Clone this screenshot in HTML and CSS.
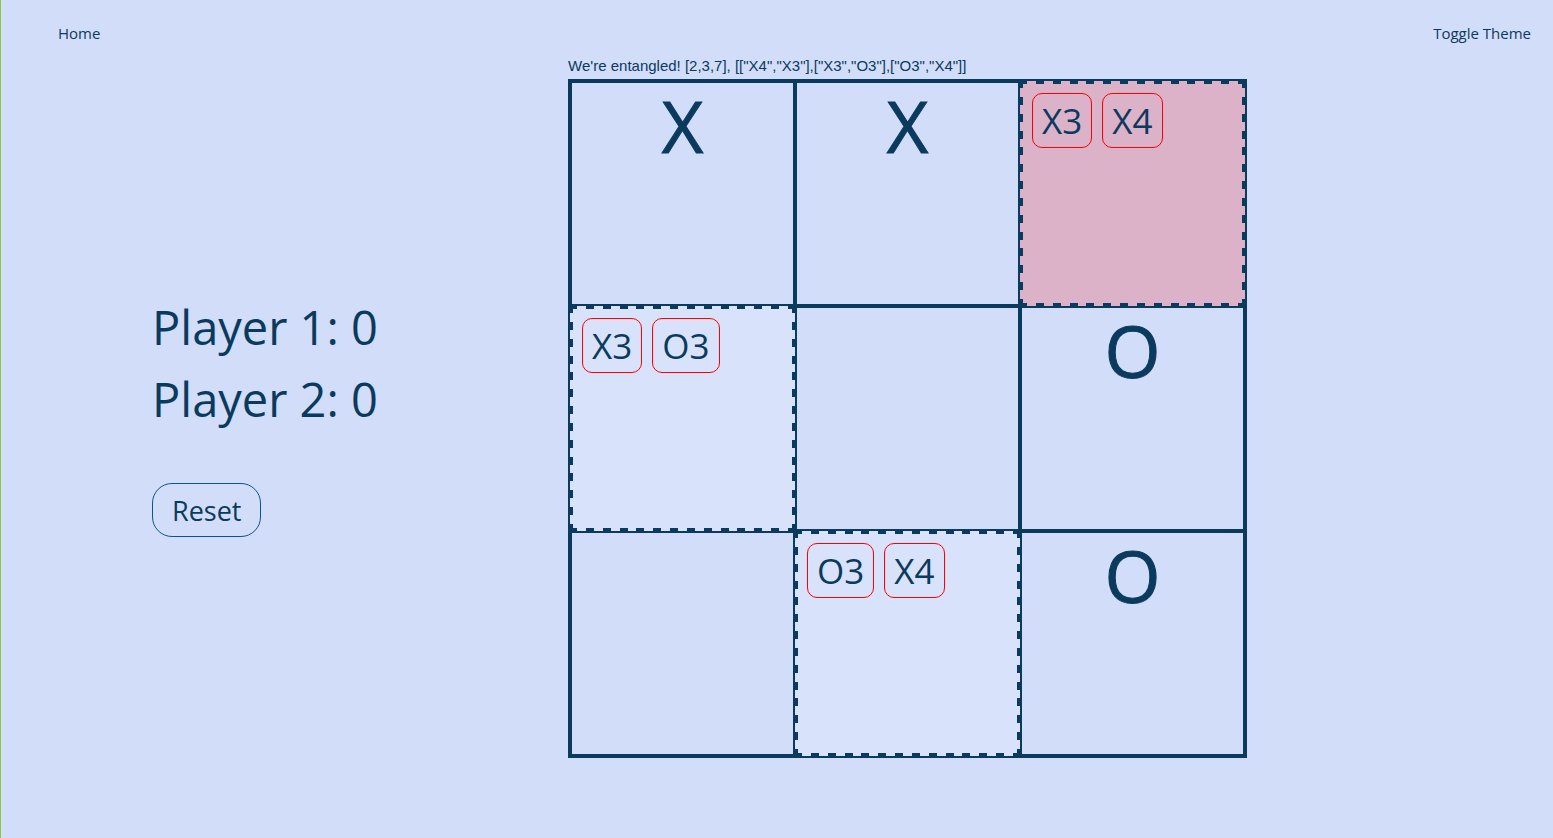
FILE: index.html
```html
<!DOCTYPE html>
<html lang="en">
<head>
<meta charset="utf-8">
<meta name="viewport" content="width=device-width, initial-scale=1">
<title>Quantum Tic-Tac-Toe</title>
<link rel="stylesheet" href="styles.css">
</head>
<body>
<nav class="nav">
  <a class="nav-item" href="#">Home</a>
  <button class="nav-item" type="button">Toggle Theme</button>
</nav>
<main class="game">
  <section class="panel">
    <p class="score">Player 1: 0</p>
    <p class="score">Player 2: 0</p>
    <button class="reset" type="button">Reset</button>
  </section>
  <section class="play">
    <p class="status">We're entangled! [2,3,7], [["X4","X3"],["X3","O3"],["O3","X4"]]</p>
    <div class="board">
      <div class="cell">X</div>
      <div class="cell">X</div>
      <div class="cell entangled selected"><button class="mark" type="button">X3</button><button class="mark" type="button">X4</button></div>
      <div class="cell entangled"><button class="mark" type="button">X3</button><button class="mark" type="button">O3</button></div>
      <div class="cell"></div>
      <div class="cell">O</div>
      <div class="cell"></div>
      <div class="cell entangled"><button class="mark" type="button">O3</button><button class="mark" type="button">X4</button></div>
      <div class="cell">O</div>
    </div>
  </section>
</main>
</body>
</html>
```
FILE: styles.css
```css
* { box-sizing: border-box; }
body {
  margin: 0;
  min-height: 100vh;
  border-left: 1px solid #8cc63f;
  background: #d2ddf9;
  color: #0a3a5e;
  font-family: "Trebuchet MS", "Open Sans", sans-serif;
}
button { font-family: inherit; color: inherit; background: none; cursor: pointer; }
p { margin: 0; }
.nav {
  display: flex;
  justify-content: space-between;
  padding: 23px 22px 11px 57px;
}
.nav-item {
  padding: 0;
  border: 0;
  color: inherit;
  font-size: 15px;
  line-height: 20px;
  text-decoration: none;
}
.game {
  display: grid;
  grid-template-columns: 36.54% minmax(0, 1fr);
}
.panel {
  align-self: center;
  padding: 16px 0 0 151px;
}
.score {
  font-size: 47px;
  line-height: 72px;
  white-space: nowrap;
}
.reset {
  height: 54px;
  margin-top: 48px;
  padding: 0 19px;
  border: 1px solid #0b5394;
  border-radius: 20px;
  font-size: 27px;
}
.status {
  padding-bottom: 2px;
  font-family: "Liberation Sans Narrow", "Arial Narrow", "Liberation Sans", sans-serif;
  font-size: 15px;
  line-height: 23px;
}
.board {
  display: grid;
  grid-template-columns: repeat(3, minmax(0, 1fr));
  max-width: 679px;
  border: 2px solid #0a3a5e;
}
.cell {
  aspect-ratio: 1;
  border: 2px solid #0a3a5e;
  font-size: 72px;
  line-height: 84px;
  text-align: center;
  -webkit-text-stroke: 1px currentColor;
}
.entangled {
  display: flex;
  align-items: flex-start;
  gap: 10px;
  padding: 9px;
  border: 3px solid #0a3a5e;
  /* wide-gap dashes, fitted evenly between solid corners */
  border-image: url("data:image/svg+xml,%3Csvg xmlns='http://www.w3.org/2000/svg' width='23' height='23'%3E%3Cpath fill='%230a3a5e' d='M0 0h7v3H3v4H0zM16 0h7v7h-3V3h-4zM0 16h3v4h4v3H0zM20 16h3v7h-7v-3h4z'/%3E%3C/svg%3E") 3 round;
  background: #d8e2fa;
  -webkit-text-stroke: 0;
}
.selected { background: #dcb2c8; }
.mark {
  height: 55px;
  padding: 0 9px;
  border: 1px solid red;
  border-radius: 10px;
  font-size: 35px;
  line-height: 53px;
}
```
